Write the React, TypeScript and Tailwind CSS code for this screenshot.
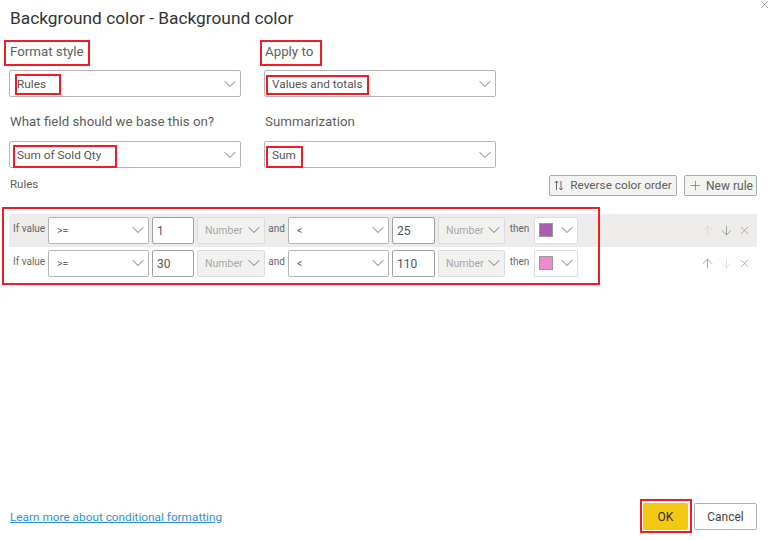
import { ArrowDown, ArrowUp, ChevronDown, Plus, X } from "lucide-react"

const rules = [
  { min: "1", max: "25", color: "bg-[#a65fae]", shaded: true, upOff: true, downOff: false },
  { min: "30", max: "110", color: "bg-[#ee8ccb]", shaded: false, upOff: false, downOff: true },
]

function Chevron() {
  return <ChevronDown size={20} strokeWidth={1.1} className="shrink-0 text-[#666]" />
}

function Field({ label, value, low }: { label: string; value: string; low?: boolean }) {
  return (
    <div className="w-[255px]">
      <div className={`h-[20px] pl-[1px] text-[13.3px] leading-[20px] text-[#605e5c] ${low ? "mb-[9px]" : "mb-[8px]"}`}>{label}</div>
      <div className="flex h-[27px] w-[232px] items-center justify-between rounded-[2px] border border-[#b5b5b5] pl-[7px] text-[11.8px] text-[#555]">
        <span className="pt-[2px]">{value}</span>
        <Chevron />
      </div>
    </div>
  )
}

function RuleRow({ rule }: { rule: (typeof rules)[number] }) {
  const box = "flex h-[27px] items-center justify-between rounded-[2px] border"
  return (
    <div className={`flex h-[33px] items-center pb-[1px] pl-[4px] pr-[6px] text-[#666] ${rule.shaded ? "bg-[#edecea]" : ""}`}>
      <span className="w-[35px] shrink-0 pb-[3px] text-[10px]">If value</span>
      <div className={`${box} w-[101px] border-[#b5b5b5] bg-white pl-[8px] text-[10.5px]`}>
        <span className="pt-[2px]">&gt;=</span>
        <Chevron />
      </div>
      <div className={`${box} ml-[3px] w-[42px] border-[#a0a0a0] bg-white pl-[4px] pt-[2px] text-[12px] text-[#555]`}>{rule.min}</div>
      <div className={`${box} ml-[3px] w-[68px] border-[#dcdcdc] bg-[#f1f1f0] pl-[7px] text-[10.5px] text-[#a8a8a8]`}>
        <span className="pt-[2px]">Number</span>
        <Chevron />
      </div>
      <span className="w-[23px] shrink-0 pb-[3px] text-center text-[10px]">and</span>
      <div className={`${box} w-[101px] border-[#b5b5b5] bg-white pl-[8px] text-[10.5px]`}>
        <span className="pt-[2px]">&lt;</span>
        <Chevron />
      </div>
      <div className={`${box} ml-[3px] w-[43px] border-[#a0a0a0] bg-white pl-[4px] pt-[2px] text-[12px] text-[#555]`}>{rule.max}</div>
      <div className={`${box} ml-[3px] w-[67px] border-[#dcdcdc] bg-[#f1f1f0] pl-[7px] text-[10.5px] text-[#a8a8a8]`}>
        <span className="pt-[2px]">Number</span>
        <Chevron />
      </div>
      <span className="w-[29px] shrink-0 pb-[3px] text-center text-[10px]">then</span>
      <div className={`${box} w-[44px] border-[#dedede] bg-white pl-[4px]`}>
        <span className={`h-[14px] w-[14px] border border-[#9a9a9a] ${rule.color}`} />
        <Chevron />
      </div>
      <div className="ml-auto flex items-center gap-[4px] text-[#777]">
        <ArrowUp size={15} strokeWidth={1} className={rule.upOff ? "text-[#cfcfcf]" : ""} />
        <ArrowDown size={15} strokeWidth={1} className={rule.downOff ? "text-[#cfcfcf]" : ""} />
        <X size={13} strokeWidth={1} />
      </div>
    </div>
  )
}

export default function App() {
  const mark = "absolute border-2 border-[#ee1c25]"
  return (
    <div className="relative flex h-[540px] w-[768px] flex-col overflow-hidden bg-white pl-[9px] pr-[11px] font-['Roboto','Open_Sans',sans-serif]">
      <X size={13} strokeWidth={1} className="absolute right-[-3px] top-[-2px] text-[#666]" />
      <h1 className="mt-[5px] h-[26px] pl-[1px] text-[17.3px] font-normal leading-[26px] text-[#333]">Background color - Background color</h1>

      <div className="mt-[11px] flex">
        <Field label="Format style" value="Rules" />
        <Field label="Apply to" value="Values and totals" />
      </div>
      <div className="mt-[15px] flex">
        <Field low label="What field should we base this on?" value="Sum of Sold Qty" />
        <Field low label="Summarization" value="Sum" />
      </div>

      <div className="mt-[7px] flex h-[21px] items-center justify-between">
        <span className="pb-[1px] pl-[1px] text-[11.5px] text-[#605e5c]">Rules</span>
        <div className="flex gap-[7px]">
          <button className="flex h-[21px] w-[128px] items-center justify-center gap-[6px] rounded-[2px] border border-[#aaa] bg-[#f3f3f2] text-[11.8px] text-[#605e5c]">
            <svg width="10" height="11" viewBox="0 0 10 11" fill="none" stroke="#666" strokeWidth="1">
              <path d="M2.5 10V1M.5 3l2-2 2 2" />
              <path d="M7 1v9M5.2 8l1.8 2 1.8-2" />
            </svg>
            Reverse color order
          </button>
          <button className="flex h-[21px] w-[73px] items-center justify-center gap-[3px] rounded-[2px] border border-[#aaa] bg-[#f3f3f2] text-[12px] text-[#605e5c]">
            <Plus size={15} strokeWidth={1} />
            New rule
          </button>
        </div>
      </div>

      <div className="mt-[18px]">
        {rules.map((rule) => (
          <RuleRow key={rule.min} rule={rule} />
        ))}
      </div>

      <div className="mt-auto mb-[10px] flex items-center justify-between">
        <a href="#" className="pl-[1px] pt-[2px] text-[11.8px] text-[#2f8fdd] underline">Learn more about conditional formatting</a>
        <div className="flex gap-[6px]">
          <button className="h-[27px] w-[45px] rounded-[2px] bg-[#f2c811] pt-[1px] text-[12px] text-[#333]">OK</button>
          <button className="h-[27px] w-[63px] rounded-[2px] border border-[#b0b0b0] bg-white pt-[1px] text-[12px] text-[#444]">Cancel</button>
        </div>
      </div>

      {/* red annotations drawn on top of the dialog */}
      <div className={`${mark} left-[4px] top-[40px] h-[26px] w-[86px]`} />
      <div className={`${mark} left-[260px] top-[40px] h-[26px] w-[62px]`} />
      <div className={`${mark} left-[15px] top-[74px] h-[21px] w-[46px]`} />
      <div className={`${mark} left-[266px] top-[75px] h-[20px] w-[103px]`} />
      <div className={`${mark} left-[13px] top-[145px] h-[23px] w-[104px]`} />
      <div className={`${mark} left-[266px] top-[146px] h-[22px] w-[37px]`} />
      <div className={`${mark} left-[2px] top-[207px] h-[78px] w-[598px]`} />
      <div className={`${mark} left-[640px] top-[499px] h-[34px] w-[52px]`} />
    </div>
  )
}
